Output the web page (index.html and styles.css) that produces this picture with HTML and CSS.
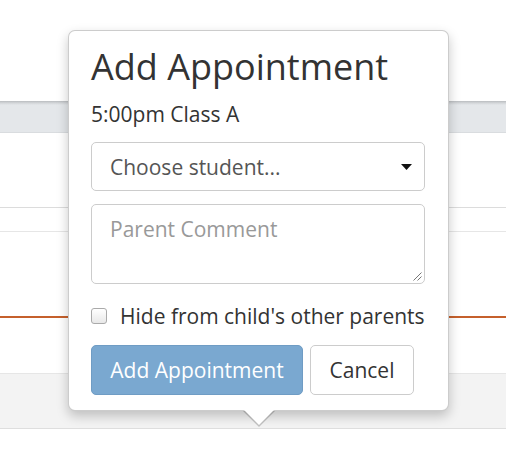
FILE: index.html
```html
<!DOCTYPE html>
<html>
<head>
<meta charset="utf-8">
<link rel="stylesheet" href="styles.css">
</head>
<body>
<div class="page">
  <div class="row r-top"></div>
  <div class="row r-head"></div>
  <div class="row r-a"></div>
  <div class="row r-b"></div>
  <div class="row r-c"></div>
  <div class="row r-d"></div>
  <div class="row r-foot"></div>
  <div class="row r-rest"></div>

  <div class="popover">
    <h3 class="title">Add Appointment</h3>
    <div class="slot">5:00pm Class A</div>
    <div class="select">
      <span>Choose student...</span>
      <svg class="caret" width="11" height="6" viewBox="0 0 11 6"><path d="M0 0H11L5.5 6Z" fill="#111"/></svg>
    </div>
    <div class="textarea">
      <span class="ph">Parent Comment</span>
      <svg class="grip" width="10" height="10" viewBox="0 0 10 10"><path d="M9.5 1.5L1.5 9.5M9.5 5.5L5.5 9.5" stroke="#777" stroke-width="1"/></svg>
    </div>
    <label class="check"><span class="box"></span><span>Hide from child's other parents</span></label>
    <div class="buttons">
      <span class="btn primary">Add Appointment</span>
      <span class="btn default">Cancel</span>
    </div>
    <div class="arrow"></div>
  </div>
</div>
</body>
</html>
```
FILE: styles.css
```css
* { box-sizing: border-box; }
html, body { margin: 0; padding: 0; background: #fff; }
body { font-family: "Open Sans", "Noto Sans", sans-serif; width: 506px; height: 470px; overflow: hidden; }
.page { position: relative; width: 506px; height: 470px; display: flex; flex-direction: column; }
.row { flex: none; }
.r-top { height: 101px; background: #fff; }
.r-head { height: 32px; background: linear-gradient(#b9bcbf 0, #d3d6d9 2px, #e4e7ea 4px, #e4e7ea 30px); border-bottom: 1px solid #d9dcdf; }
.r-a { height: 75px; border-bottom: 1px solid #dcdcdc; }
.r-b { height: 24px; border-bottom: 1px solid #e6e6e6; }
.r-c { height: 86px; border-bottom: 2px solid #c5602c; }
.r-d { height: 56px; border-bottom: 1px solid #e6e6e6; }
.r-foot { height: 55px; background: #f3f3f3; border-bottom: 1px solid #dedede; }
.r-rest { flex: 1; }

.popover {
  position: absolute; left: 68px; top: 30px; width: 381px; height: 381px;
  background: #fff; border: 1px solid rgba(0,0,0,.2); border-radius: 7px;
  box-shadow: 0 5px 12px rgba(0,0,0,.22);
  padding: 12px 23px 0 22px;
  color: #333;
  display: flex; flex-direction: column;
}
.title { margin: 0; font-weight: 400; font-size: 36px; line-height: 48px; color: #333; letter-spacing: 0; }
.slot { font-size: 21px; line-height: 26px; margin-top: 10px; color: #333; }
.select {
  margin-top: 15px; height: 49px; border: 1px solid #ccc; border-radius: 5px;
  display: flex; align-items: center; justify-content: space-between;
  padding: 0 12px 0 18px; font-size: 21px; color: #555;
}
.caret { display: block; margin-top: 1px; }
.textarea {
  position: relative; margin-top: 13px; height: 80px; border: 1px solid #ccc; border-radius: 5px;
  padding: 9px 18px; font-size: 21px; color: #999; line-height: 30px;
}
.grip { position: absolute; right: 2px; bottom: 2px; }
.check { margin-top: 19px; display: flex; align-items: center; gap: 13px; font-size: 21px; color: #333; line-height: 26px; }
.box { width: 16px; height: 16px; border: 1px solid #aaa; border-radius: 3px; background: linear-gradient(#fff, #e8e8e8); flex: none; }
.buttons { margin-top: 16px; display: flex; gap: 7px; }
.btn { height: 50px; display: flex; align-items: center; justify-content: center; font-size: 21px; border-radius: 5px; border: 1px solid transparent; }
.primary { width: 212px; background: #7aa8d0; border-color: #6f9cc4; color: #fff; }
.default { width: 104px; background: #fff; border-color: #ccc; color: #333; }
.arrow {
  position: absolute; left: 174px; bottom: -17px; width: 0; height: 0;
  border-left: 16px solid transparent; border-right: 16px solid transparent;
  border-top: 16px solid rgba(0,0,0,.2);
}
.arrow::after {
  content: ""; position: absolute; left: -15px; top: -17px; width: 0; height: 0;
  border-left: 15px solid transparent; border-right: 15px solid transparent;
  border-top: 15px solid #fff;
}
```
